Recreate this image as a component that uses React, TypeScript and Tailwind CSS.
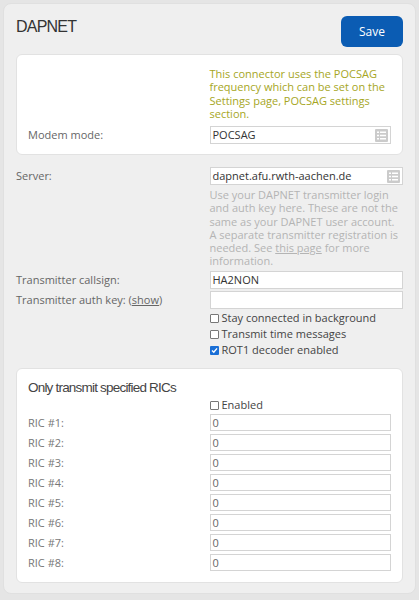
import React from 'react';

const font = { fontFamily: '"Open Sans", "Noto Sans", sans-serif' };

const SelectIcon = () => (
  <svg width="13" height="13" viewBox="0 0 13 13" className="shrink-0">
    <rect x="0" y="0" width="13" height="13" rx="1" fill="#cbcbcb" />
    <rect x="2" y="2.5" width="9" height="1.5" fill="#fff" />
    <rect x="2" y="5.75" width="9" height="1.5" fill="#fff" />
    <rect x="2" y="9" width="9" height="1.5" fill="#fff" />
    <rect x="4" y="2" width="1" height="9" fill="#cbcbcb" />
  </svg>
);

const FakeSelect = ({ value }: { value: string }) => (
  <div className="flex h-[18px] items-center justify-between border border-[#d4d4d4] bg-white pl-[2px] pr-[2px] text-[11px] text-[#333]">
    <span>{value}</span>
    <SelectIcon />
  </div>
);

const FakeInput = ({ value = '' }: { value?: string }) => (
  <div className="flex h-[18px] items-center border border-[#d4d4d4] bg-white pl-[2px] text-[11px] text-[#333]">
    {value}
  </div>
);

const Check = ({ checked = false, label }: { checked?: boolean; label: string }) => (
  <label className="flex h-4 items-center gap-[3px] text-[11px] text-[#444]">
    {checked ? (
      <span className="flex h-[9px] w-[9px] items-center justify-center rounded-[1px] bg-[#1a6fd6]">
        <svg width="7" height="7" viewBox="0 0 7 7">
          <path d="M1 3.6 L2.8 5.3 L6 1.4" stroke="#fff" strokeWidth="1.4" fill="none" />
        </svg>
      </span>
    ) : (
      <span className="h-[9px] w-[9px] rounded-[1px] border border-[#777] bg-white" />
    )}
    {label}
  </label>
);

export default function App() {
  const rics = [1, 2, 3, 4, 5, 6, 7, 8];

  return (
    <div className="h-[600px] w-[419px] bg-[#e5e5e5] p-[3px]" style={font}>
      <div className="rounded-lg border border-[#e0e0e0] bg-[#efefef] px-3 pt-3 pb-[10px]">
        {/* Header */}
        <div className="flex items-start justify-between">
          <h1
            className="mt-[1px] text-[16px] leading-5 tracking-[-0.8px] text-[#333]"
            style={{ fontFamily: '"Liberation Sans", Arial, sans-serif' }}
          >
            DAPNET
          </h1>
          <button className="h-[31px] w-[62px] rounded-md bg-[#0b5cb3] text-[12px] text-white">
            Save
          </button>
        </div>

        {/* Modem card */}
        <div className="mt-[7px] rounded-md border border-[#e2e2e2] bg-white px-[11px] pt-[12px] pb-[10px]">
          <div className="grid grid-cols-2">
            <div />
            <p className="text-[11px] leading-[13.3px] text-[#a6a61e]">
              This connector uses the POCSAG frequency which can be set on the Settings page, POCSAG settings section.
            </p>
          </div>
          <div className="mt-[6px] grid grid-cols-2 items-center">
            <span className="text-[11px] text-[#666]">Modem mode:</span>
            <FakeSelect value="POCSAG" />
          </div>
        </div>

        {/* Server settings */}
        <div className="mt-3 grid grid-cols-2">
          <span className="pt-[1px] text-[11px] leading-4 text-[#666]">Server:</span>
          <div>
            <FakeSelect value="dapnet.afu.rwth-aachen.de" />
            <p className="mt-[3px] pr-1 text-[11px] leading-[13.2px] text-[#b4b4b4]">
              Use your DAPNET transmitter login and auth key here. These are not the same as your DAPNET user account. A separate transmitter registration is needed. See{' '}
              <span className="underline">this page</span> for more information.
            </p>
          </div>
        </div>

        <div className="mt-[4px] grid grid-cols-2 items-center">
          <span className="text-[11px] text-[#666]">Transmitter callsign:</span>
          <FakeInput value="HA2NON" />
        </div>
        <div className="mt-[2px] grid grid-cols-2 items-center">
          <span className="text-[11px] text-[#666]">
            Transmitter auth key: (<span className="underline">show</span>)
          </span>
          <FakeInput />
        </div>

        <div className="mt-[1px] grid grid-cols-2">
          <div />
          <div className="flex flex-col">
            <Check label="Stay connected in background" />
            <Check label="Transmit time messages" />
            <Check checked label="ROT1 decoder enabled" />
          </div>
        </div>

        {/* RIC card */}
        <div className="mt-[10px] rounded-md border border-[#e2e2e2] bg-white px-[11px] pt-[10px] pb-[11px]">
          <h2
            className="text-[13.5px] leading-[18px] tracking-[-0.8px] text-[#444]"
            style={{ fontFamily: '"Liberation Sans", Arial, sans-serif' }}
          >
            Only transmit specified RICs
          </h2>
          <div className="grid grid-cols-2">
            <div />
            <Check label="Enabled" />
          </div>
          <div className="mt-[1px] flex flex-col gap-[3px]">
            {rics.map((n) => (
              <div key={n} className="grid grid-cols-2 items-center">
                <span className="text-[11px] text-[#777]">RIC #{n}:</span>
                <div className="flex h-[17px] items-center border border-[#d4d4d4] bg-white pl-[2px] text-[11px] text-[#666]">
                  0
                </div>
              </div>
            ))}
          </div>
        </div>
      </div>
    </div>
  );
}
